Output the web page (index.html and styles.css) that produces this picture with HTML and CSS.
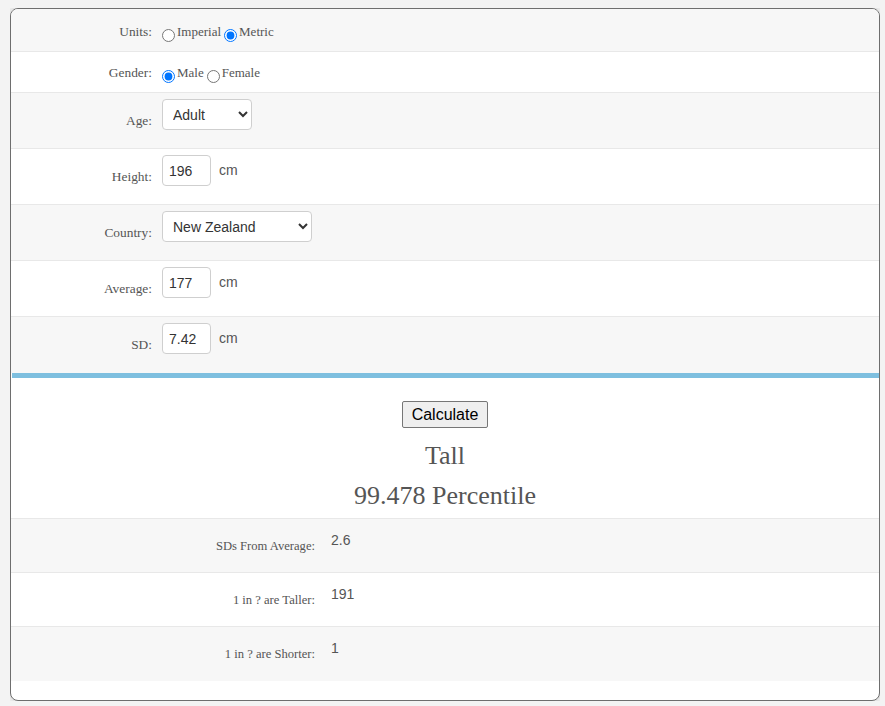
FILE: index.html
```html
<!DOCTYPE html>
<html lang="en">
<head>
<meta charset="utf-8">
<title>Height Percentile Calculator</title>
<link rel="stylesheet" href="styles.css">
</head>
<body>
<div class="card">
  <form class="form">
    <div class="row row-units shade">
      <div class="label">Units:</div>
      <div class="field radios">
        <input type="radio" name="units" id="u-imp"><label for="u-imp">Imperial</label>
        <input type="radio" name="units" id="u-met" checked><label for="u-met">Metric</label>
      </div>
    </div>
    <div class="row row-gender">
      <div class="label">Gender:</div>
      <div class="field radios">
        <input type="radio" name="gender" id="g-m" checked><label for="g-m">Male</label>
        <input type="radio" name="gender" id="g-f"><label for="g-f">Female</label>
      </div>
    </div>
    <div class="row row-tall shade">
      <div class="label">Age:</div>
      <div class="field">
        <select class="select select-age"><option>Adult</option><option>Child</option></select>
      </div>
    </div>
    <div class="row row-tall">
      <div class="label">Height:</div>
      <div class="field">
        <input class="num" type="text" value="196"><span class="unit">cm</span>
      </div>
    </div>
    <div class="row row-tall shade">
      <div class="label">Country:</div>
      <div class="field">
        <select class="select select-country"><option>New Zealand</option><option>Australia</option></select>
      </div>
    </div>
    <div class="row row-tall">
      <div class="label">Average:</div>
      <div class="field">
        <input class="num" type="text" value="177"><span class="unit">cm</span>
      </div>
    </div>
    <div class="row row-tall row-last shade">
      <div class="label">SD:</div>
      <div class="field">
        <input class="num" type="text" value="7.42"><span class="unit">cm</span>
      </div>
    </div>
  </form>
  <div class="divider"></div>
  <div class="summary">
    <button type="button" class="calc">Calculate</button>
    <div class="headline">Tall</div>
    <div class="headline">99.478 Percentile</div>
  </div>
  <div class="results">
    <div class="res shade">
      <div class="res-label">SDs From Average:</div>
      <div class="res-value">2.6</div>
    </div>
    <div class="res">
      <div class="res-label">1 in ? are Taller:</div>
      <div class="res-value">191</div>
    </div>
    <div class="res shade">
      <div class="res-label">1 in ? are Shorter:</div>
      <div class="res-value">1</div>
    </div>
  </div>
</div>
</body>
</html>
```
FILE: styles.css
```css
* { box-sizing: border-box; }

body {
  margin: 8px 5px 0 10px;
  background: #f3f3f3;
  font-family: "Liberation Serif", "DejaVu Serif", serif;
  color: #555;
}

.card {
  width: 870px;
  height: 693px;
  background: #fff;
  border: 1px solid #6e6e6e;
  border-radius: 8px;
  box-shadow: 0 0 7px rgba(0, 0, 0, 0.18);
  overflow: hidden;
}

.shade { background: #f7f7f7; }

/* input form */
.row {
  display: flex;
  align-items: flex-start;
  border-bottom: 1px solid #e8e8e8;
}
.row-units { height: 43px; }
.row-gender { height: 41px; }
.row-tall { height: 56px; }
.row-last { border-bottom: none; }

.label {
  width: 141px;
  text-align: right;
  font-size: 13.4px;
  line-height: 16px;
  padding-top: 20px;
}
.row-units .label { padding-top: 15px; }
.row-gender .label { padding-top: 13px; }

.field {
  margin-left: 10px;
  padding-top: 6px;
  display: flex;
  align-items: center;
}
.row-units .field { padding-top: 15px; }
.row-gender .field { padding-top: 13px; }

/* radios sit a little below the text line */
.radios {
  height: 18px;
  box-sizing: content-box;
  align-items: flex-start;
  font-size: 13px;
  line-height: 16px;
}
.radios input {
  width: 13px;
  height: 13px;
  margin: 5px 2px 0 3px;
}
.radios input:first-child { margin-left: 0; }

.select, .num {
  height: 31px;
  border: 1px solid #cfcfcf;
  border-radius: 4px;
  background: #fff;
  font-family: "Liberation Sans", Arial, sans-serif;
  font-size: 14px;
  color: #333;
}
.select { padding: 0 6px; }
.select-age { width: 90px; }
.select-country { width: 150px; }

.num {
  width: 49px;
  padding: 0 6px;
  margin: 0;
}
.unit {
  margin-left: 8px;
  margin-top: -2px;
  font-family: "Liberation Sans", Arial, sans-serif;
  font-size: 14px;
  color: #555;
}

.divider {
  height: 5px;
  margin-left: 1px;
  background: #7ebfdf;
}

/* outcome */
.summary {
  display: flex;
  flex-direction: column;
  align-items: center;
  padding: 23px 0 2px;
  border-bottom: 1px solid #e8e8e8;
}
.calc {
  height: 27px;
  padding: 0 9px;
  margin: 0 0 8px;
  font-family: "Liberation Sans", Arial, sans-serif;
  font-size: 16px;
  color: #000;
  background: #efefef;
  border: 1px solid #767676;
  border-radius: 2px;
}
.headline {
  font-size: 26px;
  line-height: 40px;
  color: #555;
}

.res {
  display: flex;
  align-items: flex-start;
  height: 54px;
  border-bottom: 1px solid #e8e8e8;
}
.res:last-child { border-bottom: none; }
.res-label {
  width: 304px;
  text-align: right;
  font-size: 12.6px;
  line-height: 14px;
  padding-top: 20px;
}
.res-value {
  margin-left: 16px;
  padding-top: 13px;
  font-family: "Liberation Sans", Arial, sans-serif;
  font-size: 14px;
  line-height: 16px;
  color: #555;
}
```
